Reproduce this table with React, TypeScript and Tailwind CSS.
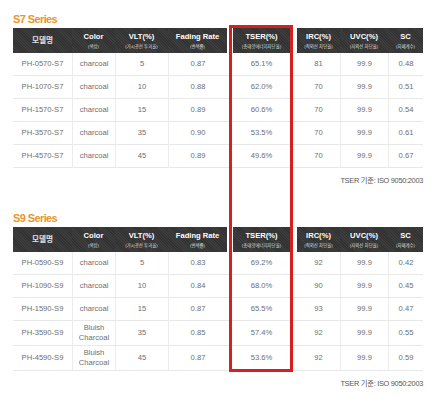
import React from "react";

type Row = {
  model: string;
  color: string[];
  vlt: string;
  fading: string;
  tser: string;
  irc: string;
  uvc: string;
  sc: string;
};

const s7: Row[] = [
  { model: "PH-0570-S7", color: ["charcoal"], vlt: "5", fading: "0.87", tser: "65.1%", irc: "81", uvc: "99.9", sc: "0.48" },
  { model: "PH-1070-S7", color: ["charcoal"], vlt: "10", fading: "0.88", tser: "62.0%", irc: "70", uvc: "99.9", sc: "0.51" },
  { model: "PH-1570-S7", color: ["charcoal"], vlt: "15", fading: "0.89", tser: "60.6%", irc: "70", uvc: "99.9", sc: "0.54" },
  { model: "PH-3570-S7", color: ["charcoal"], vlt: "35", fading: "0.90", tser: "53.5%", irc: "70", uvc: "99.9", sc: "0.61" },
  { model: "PH-4570-S7", color: ["charcoal"], vlt: "45", fading: "0.89", tser: "49.6%", irc: "70", uvc: "99.9", sc: "0.67" },
];

const s9: Row[] = [
  { model: "PH-0590-S9", color: ["charcoal"], vlt: "5", fading: "0.83", tser: "69.2%", irc: "92", uvc: "99.9", sc: "0.42" },
  { model: "PH-1090-S9", color: ["charcoal"], vlt: "10", fading: "0.84", tser: "68.0%", irc: "90", uvc: "99.9", sc: "0.45" },
  { model: "PH-1590-S9", color: ["charcoal"], vlt: "15", fading: "0.87", tser: "65.5%", irc: "93", uvc: "99.9", sc: "0.47" },
  { model: "PH-3590-S9", color: ["Bluish", "Charcoal"], vlt: "35", fading: "0.85", tser: "57.4%", irc: "92", uvc: "99.9", sc: "0.55" },
  { model: "PH-4590-S9", color: ["Bluish", "Charcoal"], vlt: "45", fading: "0.87", tser: "53.6%", irc: "92", uvc: "99.9", sc: "0.59" },
];

const grid =
  "grid grid-cols-[59px_43px_53px_59px_6px_57px_7px_43px_48px_35px]";

const dark =
  "bg-[repeating-linear-gradient(45deg,#3d3d3d_0px,#3d3d3d_1px,#323232_1px,#323232_2px)]";

function HeadCell({ t, s }: { t: string; s?: string }) {
  return (
    <div className={`${dark} flex flex-col items-center justify-center text-white`}>
      <div
        className={
          s
            ? "text-[7.6px] font-bold leading-[10px]"
            : "text-[7.6px] font-bold leading-[10px] text-[#e0e0e0]"
        }
      >
        {t}
      </div>
      {s && (
        <div className="mt-[2px] text-[4.4px] leading-[6px] text-[#dddddd]">
          {s}
        </div>
      )}
    </div>
  );
}

function Cell({
  children,
  left,
}: {
  children?: React.ReactNode;
  left?: boolean;
}) {
  return (
    <div
      className={`flex flex-col items-center justify-center border-b border-[#e8e8e8] text-center text-[7.6px] leading-[10px] text-[#6e6e6e] ${
        left ? "border-l border-l-[#ececec]" : ""
      }`}
    >
      {children}
    </div>
  );
}

function Table({ title, rows }: { title: string; rows: Row[] }) {
  return (
    <div className="flex flex-col">
      <div className="h-[17px] text-[11px] font-bold leading-[17px] tracking-[-0.6px] text-[#e8952f]">
        {title}
      </div>
      <div className={`${grid} h-[25px]`}>
        <HeadCell t="모델명" />
        <HeadCell t="Color" s="(색상)" />
        <HeadCell t="VLT(%)" s="(가시광선 투과율)" />
        <HeadCell t="Fading Rate" s="(변색률)" />
        <div />
        <HeadCell t="TSER(%)" s="(총태양에너지차단율)" />
        <div />
        <HeadCell t="IRC(%)" s="(적외선 차단율)" />
        <HeadCell t="UVC(%)" s="(자외선 차단율)" />
        <HeadCell t="SC" s="(차폐계수)" />
      </div>
      {rows.map((r) => (
        <div
          key={r.model}
          className={`${grid} ${r.color.length > 1 ? "h-[25px]" : "h-[23px]"}`}
        >
          <Cell>{r.model}</Cell>
          <Cell left>
            {r.color.map((c) => (
              <span key={c}>{c}</span>
            ))}
          </Cell>
          <Cell left>{r.vlt}</Cell>
          <Cell left>{r.fading}</Cell>
          <Cell />
          <Cell>{r.tser}</Cell>
          <Cell />
          <Cell>{r.irc}</Cell>
          <Cell left>{r.uvc}</Cell>
          <Cell left>{r.sc}</Cell>
        </div>
      ))}
      <div className="mt-[8px] h-[10px] text-right text-[7.4px] leading-[10px] tracking-[-0.3px] text-[#555555]">
        TSER 기준: ISO 9050:2003
      </div>
    </div>
  );
}

export default function App() {
  return (
    <div
      className="relative h-[397px] w-[440px] overflow-hidden bg-white pl-[13px] pt-[11px]"
      style={{ fontFamily: '"Liberation Sans", Arial, "Noto Sans CJK KR", sans-serif' }}
    >
      <div className="flex w-[410px] flex-col gap-[24px]">
        <Table title="S7 Series" rows={s7} />
        <Table title="S9 Series" rows={s9} />
      </div>
      <div className="pointer-events-none absolute left-[229px] top-[25px] h-[347px] w-[64px] border-[3px] border-[#d81f1f]" />
    </div>
  );
}
